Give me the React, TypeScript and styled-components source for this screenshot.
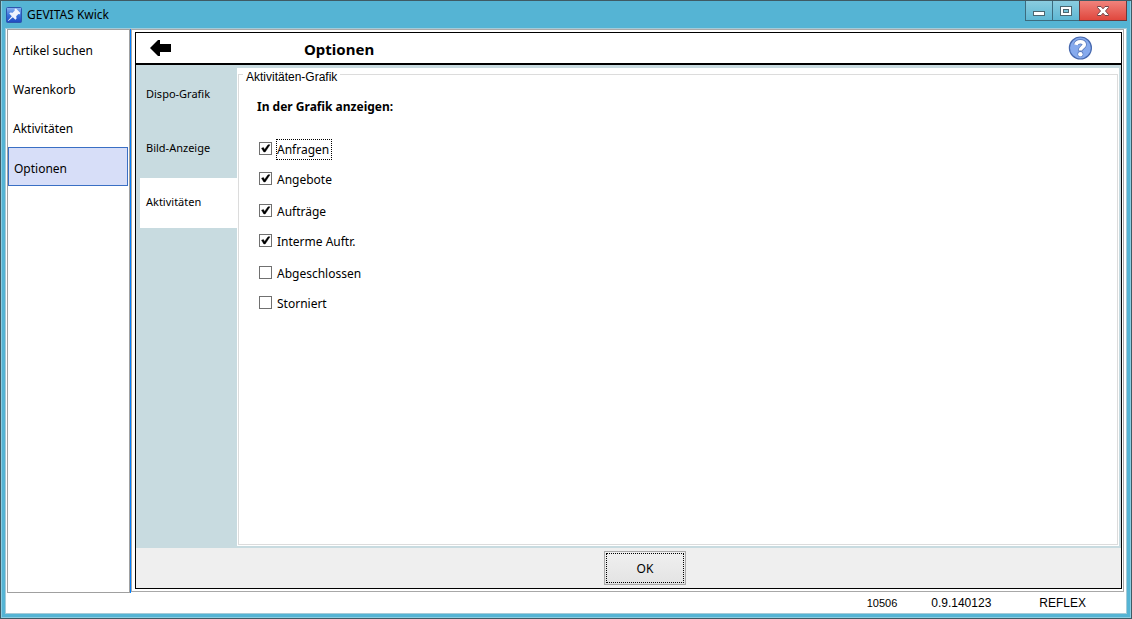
import React, { useState } from "react";
import styled, { createGlobalStyle, css } from "styled-components";

const ui = `"Noto Sans", "Open Sans", sans-serif`;
const plain = `"Liberation Sans", Arial, sans-serif`;

const GlobalStyle = createGlobalStyle`
  *, *::before, *::after { box-sizing: border-box; }
  body { margin: 0; background: #55b4d4; font-family: ${ui}; font-size: 12px; color: #000; }
  button, input { font: inherit; color: inherit; margin: 0; }
`;

const Window = styled.div`
  min-height: 100vh;
  display: flex;
  flex-direction: column;
  border: 1px solid #3f5a64;
  background: #55b4d4;
`;

const Frame = styled.div`
  flex: 1;
  display: flex;
  flex-direction: column;
  border: 1px solid #8ccde2;
  border-top: 0;
  padding: 0 3px 3px;
`;

const TitleBar = styled.header`
  display: flex;
  height: 27px;
  padding-left: 1px;
`;

const AppName = styled.h1`
  flex: 1;
  display: flex;
  align-items: center;
  gap: 5px;
  margin: 0;
  font-size: 12px;
  font-weight: 400;
`;

const Controls = styled.div`
  display: flex;
  height: 20px;
`;

const ControlButton = styled.button<{ $close?: boolean }>`
  display: flex;
  align-items: center;
  justify-content: center;
  width: ${(p) => (p.$close ? 48 : 28)}px;
  margin-left: -1px;
  padding: 0;
  border: 1px solid ${(p) => (p.$close ? "#6b3a3c" : "#3c6b7e")};
  border-top: 0;
  background: ${(p) =>
    p.$close
      ? "linear-gradient(#f0837c, #e0473d)"
      : "linear-gradient(#8accdf, #5fb8d4)"};
`;

const Client = styled.div`
  flex: 1;
  display: flex;
  flex-direction: column;
  border: 1px solid #a5cbd8;
  background: #fff;
`;

const Columns = styled.div`
  flex: 1;
  display: flex;
`;

const Nav = styled.nav`
  width: 123px;
  margin-left: 1px;
  border: 1px solid #a0a0a0;
`;

const NavItem = styled.a<{ $active?: boolean }>`
  display: flex;
  align-items: center;
  height: 39px;
  padding: 2px 0 0 5px;
  color: #000;
  text-decoration: none;
  ${(p) =>
    p.$active &&
    css`
      margin-right: 1px;
      padding-top: 4px;
      border: 1px solid #3a6fc4;
      background: #d7def8;
    `}
`;

const Splitter = styled.div`
  width: 1px;
  background: #007fff;
`;

const Workspace = styled.main`
  flex: 1;
  display: flex;
  border: 1px solid #a8a8a8;
  margin-right: 2px;
  margin-bottom: 1px;
  padding: 2px 1px 2px 3px;
`;

const Page = styled.section`
  flex: 1;
  display: flex;
  flex-direction: column;
  border: 1px solid #000;
`;

const PageHeader = styled.header`
  display: flex;
  align-items: center;
  height: 32px;
  padding: 0 29px 0 14px;
  border-bottom: 2px solid #000;
`;

const IconButton = styled.button`
  display: flex;
  padding: 0;
  border: 0;
  background: none;
`;

const PageTitle = styled.h2`
  flex: 1;
  margin: 0;
  padding: 2px 0 0 132px;
  font-size: 15px;
  line-height: 24px;
  font-weight: 700;
`;

const Body = styled.div`
  flex: 1;
  display: flex;
  padding: 3px 2px 2px 4px;
  background: #c8dbe0;
`;

const Tabs = styled.div`
  display: flex;
  flex-direction: column;
  gap: 4px;
  width: 97px;
  padding-top: 2px;
`;

const Tab = styled.button<{ $active?: boolean }>`
  height: 50px;
  padding: 0 6px 4px;
  border: 0;
  background: ${(p) => (p.$active ? "#fff" : "transparent")};
  font-size: 11px;
  text-align: left;
`;

const Panel = styled.div`
  flex: 1;
  display: flex;
  padding: 0 1px 1px;
  background: #fff;
`;

const Group = styled.fieldset`
  flex: 1;
  min-width: 0;
  margin: 0;
  padding: 0 0 0 18px;
  border: 1px solid #dcdcdc;
`;

const Legend = styled.legend`
  height: 12px;
  margin-left: -14px;
  padding: 0 3px;
  font-family: ${plain};
  font-size: 12px;
  line-height: 18px;
`;

const GroupTitle = styled.h3`
  margin: 18px 0;
  font-size: 12px;
  line-height: 18px;
  font-weight: 700;
`;

const Options = styled.div`
  display: flex;
  flex-direction: column;
  gap: 2px;
`;

const Option = styled.label`
  display: flex;
  align-items: center;
  gap: 4px;
  height: 30px;
  padding-left: 2px;
`;

const CheckBox = styled.span`
  display: grid;
  width: 13px;
  height: 13px;
  margin-bottom: 2px;

  > * { grid-area: 1 / 1; }
  > svg { pointer-events: none; visibility: hidden; }
  > input:checked + svg { visibility: visible; }
`;

const CheckInput = styled.input`
  appearance: none;
  width: 13px;
  height: 13px;
  border: 1px solid #707070;
  background: #fff;
  outline: none;
`;

const OptionText = styled.span<{ $focused?: boolean }>`
  padding-right: 2px;
  line-height: 19px;
  border: 1px dotted ${(p) => (p.$focused ? "#000" : "transparent")};
`;

const Actions = styled.div`
  display: flex;
  justify-content: center;
  padding: 3px 0 3px 33px;
  background: #efefef;
`;

const OkButton = styled.button`
  width: 82px;
  height: 34px;
  padding: 1px;
  border: 1px solid #a8a8a8;
  background: linear-gradient(#f0f0f0, #e3e3e3);

  > span {
    display: flex;
    align-items: center;
    justify-content: center;
    height: 100%;
    border: 1px dotted #000;
  }
`;

const StatusBar = styled.footer`
  display: flex;
  align-items: center;
  justify-content: flex-end;
  height: 20px;
  padding-right: 40px;
  font-family: ${plain};
`;

const StatusText = styled.span<{ $small?: boolean }>`
  margin-left: ${(p) => (p.$small ? 0 : 34)}px;
  font-size: ${(p) => (p.$small ? 11 : 12)}px;

  & + & + & { margin-left: 48px; }
`;

const PinLogo = () => (
  <svg width="16" height="16" viewBox="0 0 16 16" aria-hidden="true">
    <defs>
      <linearGradient id="pin" x1="0" y1="0" x2="0" y2="1">
        <stop offset="0" stopColor="#8db4f0" />
        <stop offset="0.5" stopColor="#3a74dc" />
        <stop offset="1" stopColor="#1e48c0" />
      </linearGradient>
    </defs>
    <rect x="0.5" y="0.5" width="15" height="15" rx="1" fill="url(#pin)" stroke="#2c55ae" />
    <path
      d="M8.6 2 L10 1.6 L14.2 5.8 L13.8 7.2 L12.4 7 L10.2 9.2 L10.6 11.6 L9.4 12.8 L6.8 10.2 L2.4 14 L2 13.6 L5.8 9.2 L3.2 6.6 L4.4 5.4 L6.6 5.8 L8.8 3.6 Z"
      fill="#eef3fd"
    />
  </svg>
);

const BackArrow = () => (
  <svg width="22" height="18" viewBox="0 0 22 18" aria-hidden="true">
    <path d="M0 9 L8 1 H10 V5 H21 V13 H10 V17 H8 Z" fill="#000" />
  </svg>
);

const HelpIcon = () => (
  <svg width="24" height="24" viewBox="0 0 24 24" aria-hidden="true">
    <circle cx="12.4" cy="12" r="11" fill="#86aaed" stroke="#4668ae" strokeWidth="1.2" />
    <g fill="none" stroke="#5576b8" strokeWidth="5">
      <path d="M7.9 8.8 C8.7 4.6 16.5 4.8 16.3 8.6 C16.2 11.2 12.4 11.2 12.4 15" />
      <circle cx="12.4" cy="18" r="0.4" />
    </g>
    <path
      d="M7.9 8.8 C8.7 4.6 16.5 4.8 16.3 8.6 C16.2 11.2 12.4 11.2 12.4 14.6"
      fill="none"
      stroke="#fff"
      strokeWidth="3.6"
    />
    <circle cx="12.4" cy="18.2" r="2.2" fill="#fff" />
  </svg>
);

const MinimizeGlyph = () => (
  <svg width="12" height="12" viewBox="0 0 12 12" aria-hidden="true">
    <rect x="0.5" y="6.5" width="11" height="4" fill="#fff" stroke="#4b6670" />
  </svg>
);

const MaximizeGlyph = () => (
  <svg width="12" height="12" viewBox="0 0 12 12" aria-hidden="true">
    <rect x="0.5" y="1.5" width="11" height="9" fill="#fff" stroke="#4b6670" />
    <rect x="3.5" y="4.5" width="5" height="3" fill="#79c3da" stroke="#4b6670" />
  </svg>
);

const CloseGlyph = () => (
  <svg width="12" height="12" viewBox="0 0 12 12" aria-hidden="true">
    <path
      d="M0.5 1.5 H4 L6 3.8 L8 1.5 H11.5 V2.5 L8.5 6 L11.5 9.5 V10.5 H8 L6 8.2 L4 10.5 H0.5 V9.5 L3.5 6 L0.5 2.5 Z"
      fill="#fff"
      stroke="#704448"
    />
  </svg>
);

const CheckMark = () => (
  <svg width="13" height="13" viewBox="0 0 13 13" aria-hidden="true">
    <path d="M2.5 6.2 L4.4 5.4 L5.6 7.4 L9 2.8 H11 L6.2 10 H4.8 Z" fill="#000" stroke="#000" strokeWidth="0.4" />
  </svg>
);

const navItems = ["Artikel suchen", "Warenkorb", "Aktivitäten", "Optionen"];
const tabNames = ["Dispo-Grafik", "Bild-Anzeige", "Aktivitäten"];
const choices = [
  { name: "Anfragen", checked: true },
  { name: "Angebote", checked: true },
  { name: "Aufträge", checked: true },
  { name: "Interme Auftr.", checked: true },
  { name: "Abgeschlossen", checked: false },
  { name: "Storniert", checked: false },
];
const choicePairs = [choices.slice(0, 2), choices.slice(2, 4), choices.slice(4)];

export default function App() {
  const [tab, setTab] = useState("Aktivitäten");

  return (
    <Window>
      <GlobalStyle />
      <Frame>
        <TitleBar>
          <AppName>
            <PinLogo />
            GEVITAS Kwick
          </AppName>
          <Controls>
            <ControlButton aria-label="Minimieren"><MinimizeGlyph /></ControlButton>
            <ControlButton aria-label="Maximieren"><MaximizeGlyph /></ControlButton>
            <ControlButton $close aria-label="Schließen"><CloseGlyph /></ControlButton>
          </Controls>
        </TitleBar>
        <Client>
          <Columns>
            <Nav>
              {navItems.map((item) => (
                <NavItem key={item} href="#" $active={item === "Optionen"}>{item}</NavItem>
              ))}
            </Nav>
            <Splitter />
            <Workspace>
              <Page>
                <PageHeader>
                  <IconButton aria-label="Zurück"><BackArrow /></IconButton>
                  <PageTitle>Optionen</PageTitle>
                  <IconButton aria-label="Hilfe"><HelpIcon /></IconButton>
                </PageHeader>
                <Body>
                  <Tabs role="tablist">
                    {tabNames.map((name) => (
                      <Tab
                        key={name}
                        role="tab"
                        aria-selected={name === tab}
                        $active={name === tab}
                        onClick={() => setTab(name)}
                      >
                        {name}
                      </Tab>
                    ))}
                  </Tabs>
                  <Panel>
                    <Group>
                      <Legend>Aktivitäten-Grafik</Legend>
                      <GroupTitle>In der Grafik anzeigen:</GroupTitle>
                      <Options>
                        {choicePairs.map((pair) => (
                          <div key={pair[0].name}>
                            {pair.map((choice) => (
                              <Option key={choice.name}>
                                <CheckBox>
                                  <CheckInput type="checkbox" defaultChecked={choice.checked} />
                                  <CheckMark />
                                </CheckBox>
                                <OptionText $focused={choice.name === "Anfragen"}>{choice.name}</OptionText>
                              </Option>
                            ))}
                          </div>
                        ))}
                      </Options>
                    </Group>
                  </Panel>
                </Body>
                <Actions>
                  <OkButton><span>OK</span></OkButton>
                </Actions>
              </Page>
            </Workspace>
          </Columns>
          <StatusBar>
            <StatusText $small>10506</StatusText>
            <StatusText>0.9.140123</StatusText>
            <StatusText>REFLEX</StatusText>
          </StatusBar>
        </Client>
      </Frame>
    </Window>
  );
}
